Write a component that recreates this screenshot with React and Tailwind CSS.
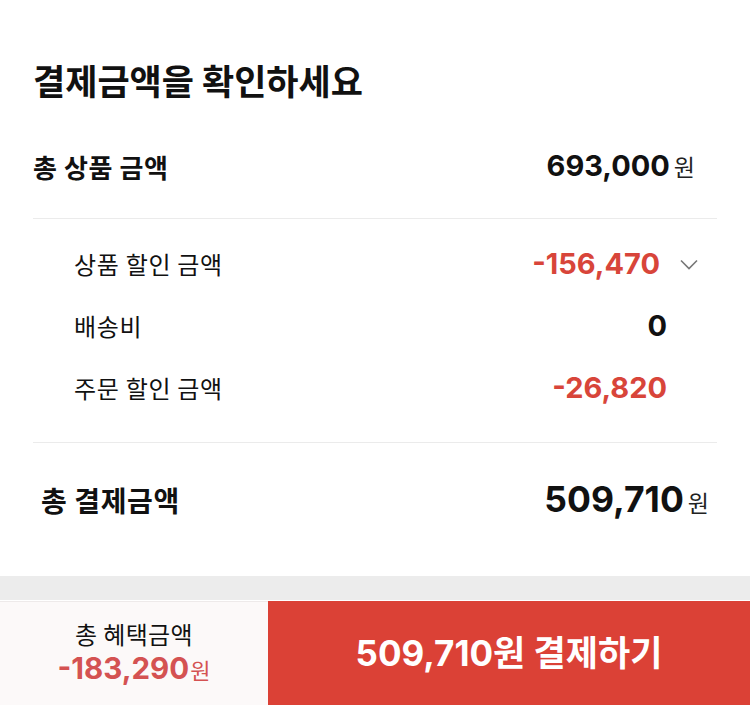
import React from 'react';

const kr = "font-['Noto_Sans_CJK_KR',sans-serif]";
const num = "font-['Inter','Noto_Sans_CJK_KR',sans-serif]";

const SubRow = ({label, value, red, chevron}) => (
    <div className="flex h-[62px] items-center justify-between">
        <span className={`${kr} text-[24px] tracking-[0.7px] text-[#111]`}>{label}</span>
        <div className="flex items-center">
            <span className={`${num} text-[29px] font-bold ${red ? 'text-[#d8453a]' : 'text-[#111]'}`}>
                {value}
            </span>
            {chevron && (
                <svg width="18" height="11" viewBox="0 0 18 11" className="ml-[20px] -mr-[31px]">
                    <path d="M1 1.5 L9 9.5 L17 1.5" fill="none" stroke="#777" strokeWidth="1.6"/>
                </svg>
            )}
        </div>
    </div>
);

const App = () => {
    return (
        <div className="w-[750px] h-[705px] bg-white flex flex-col overflow-hidden">
            {/* Summary */}
            <div className="flex-1 px-[33px] pt-[58px]">
                <h2 className={`${kr} text-[35px] font-bold leading-[44px] text-[#111]`}>
                    결제금액을 확인하세요
                </h2>

                <div className="mt-[44px] flex h-[40px] items-center justify-between pr-[22px]">
                    <span className={`${kr} text-[26px] font-bold tracking-[0.6px] text-[#111]`}>총 상품 금액</span>
                    <span className="flex items-baseline">
                        <span className={`${num} text-[29px] font-bold text-[#111]`}>693,000</span>
                        <span className={`${kr} ml-[4px] text-[23px] text-[#222]`}>원</span>
                    </span>
                </div>

                <div className="mt-[32px] h-px bg-[#ebebeb]"/>

                <div className="mt-[14px] pl-[41px] pr-[50px]">
                    <SubRow label="상품 할인 금액" value="-156,470" red chevron/>
                    <SubRow label="배송비" value="0"/>
                    <SubRow label="주문 할인 금액" value="-26,820" red/>
                </div>

                <div className="mt-[23px] h-px bg-[#ebebeb]"/>

                <div className="mt-[27px] flex h-[60px] items-center justify-between px-[8px]">
                    <span className={`${kr} text-[28px] font-bold tracking-[0.6px] text-[#111]`}>총 결제금액</span>
                    <span className="flex items-baseline">
                        <span className={`${num} text-[35.5px] font-bold text-[#111]`}>509,710</span>
                        <span className={`${kr} ml-[4px] text-[23px] text-[#222]`}>원</span>
                    </span>
                </div>
            </div>

            {/* Bottom bar */}
            <div className="h-[24px] bg-[#ececec]"/>
            <div className="h-px bg-white"/>
            <div className="flex h-[104px]">
                <div className="flex w-[268px] flex-col items-center justify-center border-t border-[#eeeaea] bg-[#fcf9f9] pb-[2px]">
                    <span className={`${kr} text-[24px] leading-[30px] tracking-[0.4px] text-[#111]`}>총 혜택금액</span>
                    <span className="flex items-baseline">
                        <span className={`${num} text-[29.5px] font-bold leading-[38px] text-[#d45252]`}>-183,290</span>
                        <span className={`${kr} ml-[1px] text-[22px] text-[#d45252]`}>원</span>
                    </span>
                </div>
                <button className="flex flex-1 items-center justify-center bg-[#db4136]">
                    <span className={`${num} text-[35px] font-bold text-white`}>509,710원 결제하기</span>
                </button>
            </div>
        </div>
    );
};

export default App;
